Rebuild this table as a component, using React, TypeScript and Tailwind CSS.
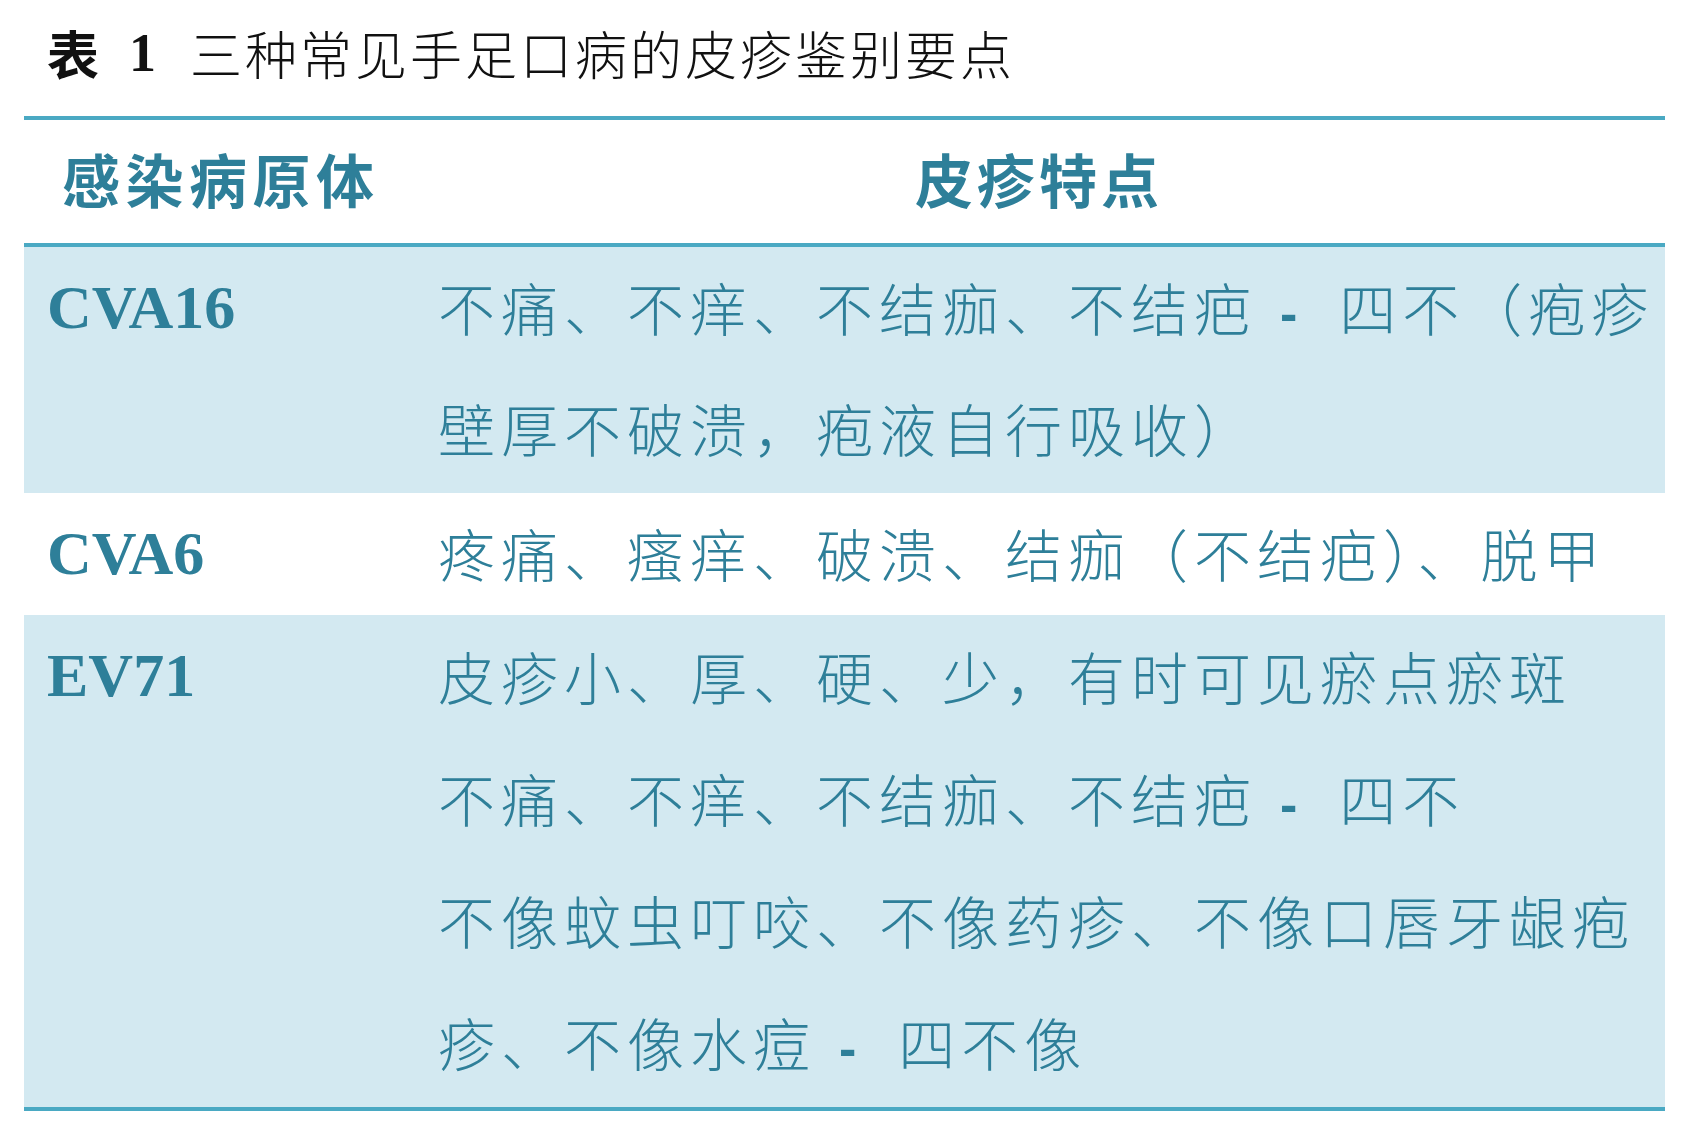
import React from "react";

const CJK = { fontFamily: '"Noto Sans CJK SC", "Noto Sans", sans-serif' };
const SERIF = { fontFamily: '"Liberation Serif", "Times New Roman", serif' };

function Dash() {
  return (
    <span
      className="inline-block ml-[23px] mr-[42px] font-bold text-[52px] tracking-normal"
      style={{ fontFamily: '"Liberation Sans", Arial, sans-serif' }}
    >
      -
    </span>
  );
}

function Line({ children }: { children: React.ReactNode }) {
  return <div className="h-[121px] leading-[121px] whitespace-nowrap">{children}</div>;
}

function Line2({ children }: { children: React.ReactNode }) {
  return <div className="h-[122px] leading-[122px] whitespace-nowrap">{children}</div>;
}

function Name({ children }: { children: React.ReactNode }) {
  return (
    <div
      className="w-[414px] shrink-0 pl-[23px] h-[121px] leading-[121px] text-[62px] font-bold"
      style={SERIF}
    >
      {children}
    </div>
  );
}

export default function App() {
  return (
    <div className="w-[1682px] h-[1125px] bg-white overflow-hidden">
      <div className="ml-[24px] w-[1641px]">
        {/* Title */}
        <div className="h-[116px] flex items-center pl-[23px] pb-[10px] text-[#111] text-[52px] whitespace-nowrap">
          <span className="font-bold tracking-[2px]" style={CJK}>表</span>
          <span className="font-bold ml-[28px] text-[54px]" style={SERIF}>
            1
          </span>
          <span className="ml-[34px] tracking-[3px] font-light" style={CJK}>
            三种常见手足口病的皮疹鉴别要点
          </span>
        </div>

        {/* Table */}
        <div className="border-t-[4px] border-b-[4px] border-[#4aa9c3] text-[#2e7f99]">
          {/* Header */}
          <div
            className="h-[127px] pb-[6px] border-b-[4px] border-[#4aa9c3] flex items-center text-[58px] font-bold"
            style={CJK}
          >
            <div className="w-[414px] pl-[38px] tracking-[5.5px]">感染病原体</div>
            <div className="pl-[477px] tracking-[4px]">皮疹特点</div>
          </div>

          {/* CVA16 */}
          <div className="h-[246px] bg-[#d3e9f1] flex">
            <Name>CVA16</Name>
            <div className="text-[57px] font-light tracking-[6px] -mt-[1px]" style={CJK}>
              <Line>
                不痛、不痒、不结痂、不结疤<Dash />四不（疱疹
              </Line>
              <Line>壁厚不破溃，疱液自行吸收）</Line>
            </div>
          </div>

          {/* CVA6 */}
          <div className="h-[122px] bg-white flex">
            <Name>CVA6</Name>
            <div className="text-[57px] font-light tracking-[6px] -mt-[1px]" style={CJK}>
              <Line>疼痛、瘙痒、破溃、结痂（不结疤）、脱甲</Line>
            </div>
          </div>

          {/* EV71 */}
          <div className="h-[492px] bg-[#d3e9f1] flex">
            <Name>EV71</Name>
            <div className="text-[57px] font-light tracking-[6px] -mt-[1px]" style={CJK}>
              <Line2>皮疹小、厚、硬、少，有时可见瘀点瘀斑</Line2>
              <Line2>
                不痛、不痒、不结痂、不结疤<Dash />四不
              </Line2>
              <Line2>不像蚊虫叮咬、不像药疹、不像口唇牙龈疱</Line2>
              <Line2>
                疹、不像水痘<Dash />四不像
              </Line2>
            </div>
          </div>
        </div>
      </div>
    </div>
  );
}
